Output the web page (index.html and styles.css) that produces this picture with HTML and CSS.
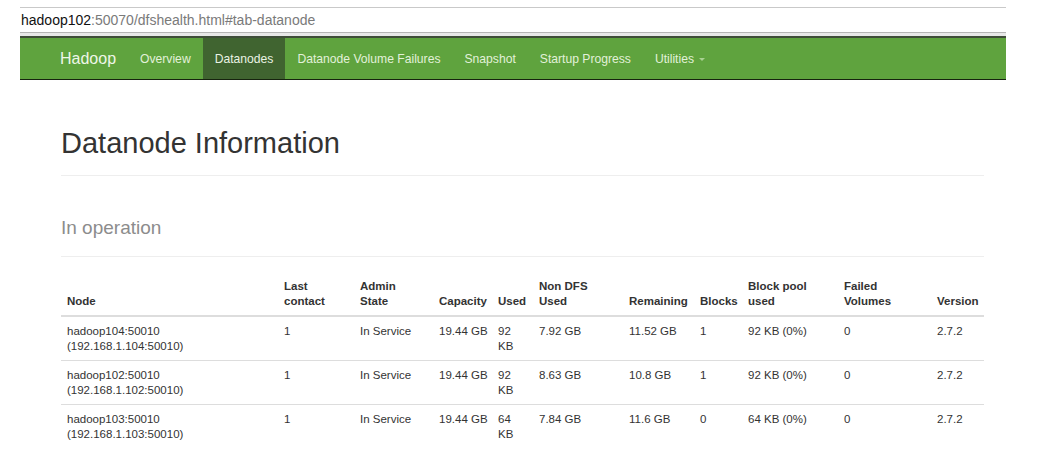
FILE: index.html
```html
<!DOCTYPE html>
<html lang="en">
<head>
<meta charset="utf-8">
<title>Namenode information</title>
<link rel="stylesheet" href="styles.css">
</head>
<body>
<div class="page">
  <div class="browser">
    <div class="urlbar"><span class="host">hadoop102</span>:50070/dfshealth.html#tab-datanode</div>
    <div class="urlshade"></div>
  </div>
  <nav class="navbar">
    <a class="brand" href="#">Hadoop</a>
    <a class="nav-item" href="#">Overview</a>
    <a class="nav-item active" href="#">Datanodes</a>
    <a class="nav-item" href="#">Datanode Volume Failures</a>
    <a class="nav-item" href="#">Snapshot</a>
    <a class="nav-item" href="#">Startup Progress</a>
    <a class="nav-item" href="#">Utilities <span class="caret"></span></a>
  </nav>
  <main class="container">
    <div class="page-header">
      <h1>Datanode Information</h1>
    </div>
    <div class="page-header sub">
      <h2>In operation</h2>
    </div>
    <table class="table">
      <colgroup>
        <col class="c-node"><col class="c-last"><col class="c-admin"><col class="c-cap"><col class="c-used"><col class="c-nondfs"><col class="c-rem"><col class="c-blocks"><col class="c-bpu"><col class="c-failed"><col class="c-ver">
      </colgroup>
      <thead>
        <tr>
          <th>Node</th>
          <th>Last<br>contact</th>
          <th>Admin<br>State</th>
          <th>Capacity</th>
          <th>Used</th>
          <th>Non DFS<br>Used</th>
          <th>Remaining</th>
          <th>Blocks</th>
          <th>Block pool<br>used</th>
          <th>Failed<br>Volumes</th>
          <th>Version</th>
        </tr>
      </thead>
      <tbody>
        <tr>
          <td>hadoop104:50010<br>(192.168.1.104:50010)</td>
          <td>1</td>
          <td>In Service</td>
          <td>19.44 GB</td>
          <td>92<br>KB</td>
          <td>7.92 GB</td>
          <td>11.52 GB</td>
          <td>1</td>
          <td>92 KB (0%)</td>
          <td>0</td>
          <td>2.7.2</td>
        </tr>
        <tr>
          <td>hadoop102:50010<br>(192.168.1.102:50010)</td>
          <td>1</td>
          <td>In Service</td>
          <td>19.44 GB</td>
          <td>92<br>KB</td>
          <td>8.63 GB</td>
          <td>10.8 GB</td>
          <td>1</td>
          <td>92 KB (0%)</td>
          <td>0</td>
          <td>2.7.2</td>
        </tr>
        <tr>
          <td>hadoop103:50010<br>(192.168.1.103:50010)</td>
          <td>1</td>
          <td>In Service</td>
          <td>19.44 GB</td>
          <td>64<br>KB</td>
          <td>7.84 GB</td>
          <td>11.6 GB</td>
          <td>0</td>
          <td>64 KB (0%)</td>
          <td>0</td>
          <td>2.7.2</td>
        </tr>
      </tbody>
    </table>
  </main>
</div>
</body>
</html>
```

FILE: styles.css
```css
html, body {
  margin: 0;
  padding: 0;
  background: #ffffff;
}

body {
  font-family: "Liberation Sans", Arial, sans-serif;
  color: #333333;
}

.page {
  width: 986px;
  margin-left: 20px;
}

/* browser address bar strip */
.browser {
  margin-top: 7px;
  border-top: 1px solid #c9c9c9;
}

.urlbar {
  height: 24px;
  line-height: 24px;
  padding-left: 1px;
  font-size: 14px;
  color: #7a7a7a;
  border-bottom: 1px solid #b4b4b4;
  white-space: nowrap;
}

.urlbar .host {
  color: #111111;
}

.urlshade {
  height: 3px;
  background: #e8e8e8;
}

/* navbar */
.navbar {
  display: flex;
  align-items: stretch;
  height: 41px;
  padding-left: 28px;
  background: #5fa33e;
  border-top: 2px solid #3f4d39;
  border-bottom: 1px solid #17230f;
}

.navbar a {
  display: flex;
  align-items: center;
  padding: 0 12px;
  text-decoration: none;
  white-space: nowrap;
}

.brand {
  font-size: 16px;
  color: #eef6e8;
}

.nav-item {
  font-size: 12.15px;
  color: #e2f1d9;
}

.nav-item.active {
  background: #406430;
  color: #eaf3e4;
}

.caret {
  display: inline-block;
  width: 0;
  height: 0;
  margin-left: 5px;
  margin-top: 1px;
  border-left: 3px solid transparent;
  border-right: 3px solid transparent;
  border-top: 3px solid #a9d192;
}

/* content */
.container {
  padding: 48px 22px 0 41px;
}

.page-header {
  padding-bottom: 15px;
  border-bottom: 1px solid #eeeeee;
}

.page-header h1 {
  margin: 0;
  font-size: 29px;
  font-weight: normal;
  line-height: 1.1;
  color: #333333;
}

.page-header.sub {
  margin-top: 42px;
  padding-bottom: 17px;
}

.page-header h2 {
  margin: 0;
  font-size: 19px;
  font-weight: normal;
  line-height: 1.1;
  color: #8c8c8c;
}

/* table */
.table {
  width: 923px;
  margin-top: 15px;
  table-layout: fixed;
  border-collapse: collapse;
  font-size: 11.5px;
  line-height: 15px;
  color: #333333;
}

.c-node { width: 217px; }
.c-last { width: 76px; }
.c-admin { width: 79px; }
.c-cap { width: 59px; }
.c-used { width: 41px; }
.c-nondfs { width: 90px; }
.c-rem { width: 71px; }
.c-blocks { width: 48px; }
.c-bpu { width: 96px; }
.c-failed { width: 93px; }
.c-ver { width: 53px; }

.table th {
  padding: 7px 6px 6px;
  text-align: left;
  vertical-align: bottom;
  font-weight: bold;
  white-space: nowrap;
  border-bottom: 2px solid #dddddd;
}

.table td {
  padding: 7px 6px 6px;
  text-align: left;
  vertical-align: top;
  white-space: nowrap;
  border-top: 1px solid #dddddd;
}
```
